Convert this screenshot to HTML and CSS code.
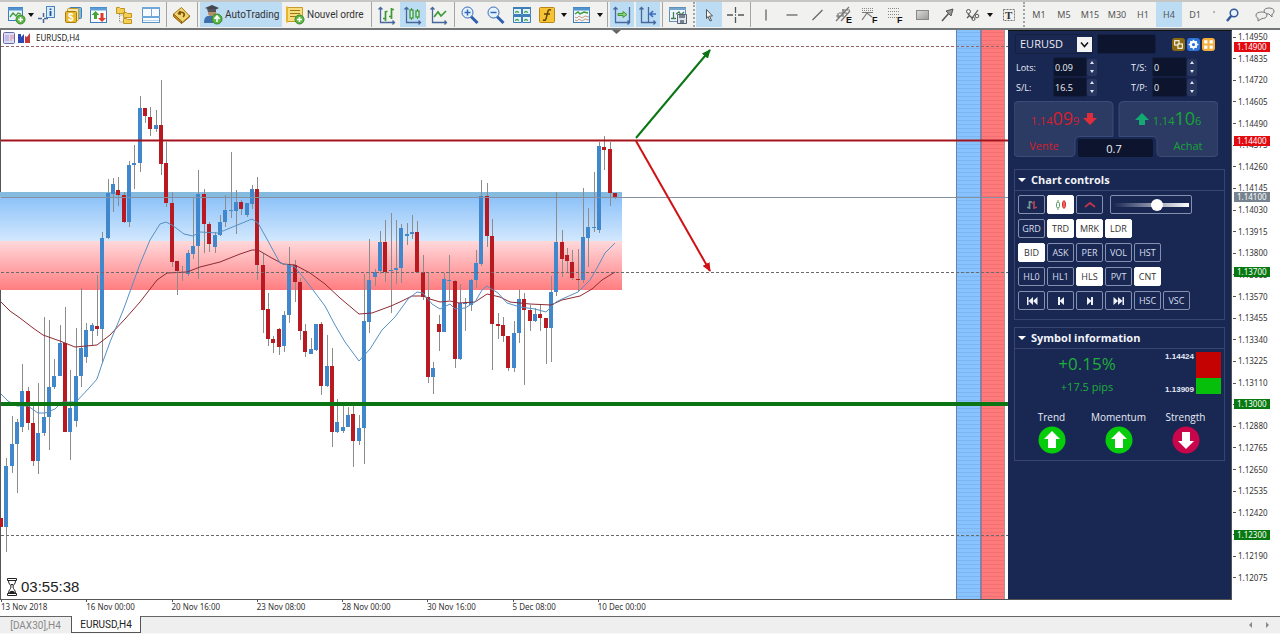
FILE: index.html
```html
<!DOCTYPE html>
<html lang="en">
<head>
<meta charset="utf-8">
<title>EURUSD,H4</title>
<link rel="stylesheet" href="styles.css">
</head>
<body>
<div class="app">
<header class="toolbar">
  <button class="tool narrow" aria-label="New chart"><svg class="icon" viewBox="0 0 20 20"><rect x="2.500" y="2.500" width="14" height="13" fill="#e9f4fc" stroke="#3c7dbb"/><path d="M2 4h15" stroke="#4f93cf" stroke-width="3"/><path d="M4 12l3-4 3 3 2-3 3 1" fill="none" stroke="#3d9a35" stroke-width="1.300"/><circle cx="14.500" cy="14.500" r="4.500" fill="#5bb545" stroke="#3b8a2c"/><path d="M14.500 12v5M12 14.500h5" stroke="#fff" stroke-width="1.600"/></svg></button>
  <button class="caret slim" aria-label="Chart list"><svg class="arrow" viewBox="0 0 6 4"><path d="M0 0h6l-3 4z"/></svg></button>
  <button class="tool" aria-label="Market watch"><svg class="icon" viewBox="0 0 20 20"><path d="M6.500 8v11M1 13.500h11" stroke="#4a6a94" stroke-width="1.500" stroke-dasharray="4 2"/><rect x="9.500" y="1.500" width="8" height="11" fill="#d7ecfb" stroke="#4b87bd"/><path d="M13.500 6v5M13.500 3.500v1.500" stroke="#244f9c" stroke-width="1.800"/></svg></button>
  <button class="tool" aria-label="Symbols"><svg class="icon" viewBox="0 0 20 20"><rect x="6.500" y="2.500" width="12" height="11" rx="1" fill="#7db7e4" stroke="#3f7eb3"/><rect x="4.500" y="3.500" width="11" height="12" rx="1" fill="#f6e7a8" stroke="#c49a2a"/><rect x="2.500" y="6.500" width="11" height="11" rx="1" fill="#e9b92c" stroke="#a97b12"/><text class="ic-s" x="5" y="16">$</text></svg></button>
  <button class="tool" aria-label="Exchange"><svg class="icon" viewBox="0 0 20 20"><rect x="1.500" y="2.500" width="16" height="15" fill="#fff" stroke="#3c7dbb"/><path d="M1 4h17" stroke="#5b9fd6" stroke-width="3"/><path d="M6.500 6l4 4H8v4H5v-4H2.500z" fill="#46a53a"/><path d="M13 17l-4-4h2.500V8h3v5H17z" fill="#dc3b2e"/></svg></button>
  <button class="tool" aria-label="Navigator"><svg class="icon" viewBox="0 0 20 20"><path d="M4.500 7v10h5M4.500 10h5" fill="none" stroke="#8f8b6b" stroke-dasharray="1 1"/><path d="M1.500 2.500h3l1 1h4v5h-8zM8.500 7.500h3l1 1h4v4h-8zM8.500 13.500h3l1 1h4v4h-8z" fill="#f4cf52" stroke="#c09522"/></svg></button>
  <button class="tool" aria-label="Terminal"><svg class="icon" viewBox="0 0 20 20"><rect x="1.500" y="2.500" width="17" height="15" fill="#f7fbff" stroke="#5c93c1"/><path d="M1 3h18M1 12h18" stroke="#6da8d8" stroke-width="2"/><path d="M10.500 3v8" stroke="#7ba7cc"/><path d="M2 15.500h16" stroke="#b8d4ea"/></svg></button>
  <span class="sep"></span>
  <button class="tool" aria-label="History"><svg class="icon" viewBox="0 0 20 20"><path d="M1.500 9l8-6.500 8 8.500-8 7z" fill="#f3d56e" stroke="#a5781a"/><path d="M1.500 9v2.500l8 7v-2.500zM9.500 18.500l8-6.500v-1.500" fill="#c98f20" stroke="#8a6416"/><path d="M6 9l2.500-3M6 9h3M7 8c4-2 7 1 4 4" fill="none" stroke="#7d5510" stroke-width="1.600"/></svg></button>
  <span class="sep"></span>
  <button class="tool-text active"><svg class="icon" viewBox="0 0 20 20"><path d="M2 3l7-3 7 3-6 3z" fill="#45464c"/><path d="M5 4h8v4c0 5-8 5-8 0z" fill="#b38f6c"/><path d="M4 4h9v3H5z" fill="#55565c"/><path d="M1 18c0-7 3-7 6-7 5 0 8 1 8 7z" fill="#3f70ab"/><circle cx="14" cy="14" r="5" fill="#5bb545" stroke="#37872b"/><path d="M14 17v-5M11.500 14l2.500-3 2.500 3" fill="none" stroke="#fff" stroke-width="1.600"/></svg>AutoTrading</button>
  <button class="tool-text"><svg class="icon" viewBox="0 0 20 20"><path d="M2.500 2.500h15v10l-3 4h-12z" fill="#f8dd79" stroke="#c79c2a"/><path d="M1 1.500h2v16H1" fill="#e7b42e"/><path d="M5 5.500h10M5 8.500h10M5 11.500h7" stroke="#9b7622"/><circle cx="14.500" cy="14.500" r="4.500" fill="#5bb545" stroke="#3b8a2c"/><path d="M14.500 12v5M12 14.500h5" stroke="#fff" stroke-width="1.600"/></svg>Nouvel ordre</button>
  <span class="sep"></span>
  <button class="tool" aria-label="Bar chart"><svg class="icon" viewBox="0 0 20 20"><path class="ax" d="M3.500 3v14.500H17M1.500 4.500l2-2 2 2M15.500 15.500l2 2-2 2"/><path d="M8.500 6v10M6 13.500h2.500M8.500 6.500h2M14.500 3v11M12 11.500h2.500M14.500 4.500h2.500" stroke="#3c9a35" stroke-width="1.700"/></svg></button>
  <button class="tool active" aria-label="Candlesticks"><svg class="icon" viewBox="0 0 20 20"><path class="ax" d="M3.500 3v14.500H17M1.500 4.500l2-2 2 2M15.500 15.500l2 2-2 2"/><path d="M8.500 3v12M14.500 4v10" stroke="#3c9a35"/><rect x="7" y="5" width="3" height="8" fill="#d5eef6" stroke="#3c9a35" stroke-width="1.300"/><rect x="13" y="6" width="3" height="6" fill="#d5eef6" stroke="#3c9a35" stroke-width="1.300"/></svg></button>
  <button class="tool" aria-label="Line chart"><svg class="icon" viewBox="0 0 20 20"><path class="ax" d="M3.500 3v14.500H17M1.500 4.500l2-2 2 2M15.500 15.500l2 2-2 2"/><path d="M5 12l4-5 3 4 5-5" fill="none" stroke="#3c9a35" stroke-width="1.700"/></svg></button>
  <span class="sep"></span>
  <button class="tool" aria-label="Zoom in"><svg class="icon" viewBox="0 0 20 20"><path d="M10.500 11l7 7" stroke="#2f5fae" stroke-width="3"/><circle cx="7.500" cy="7.500" r="5.500" fill="#e4f2fc" stroke="#3268b5"/><path d="M7.500 4.500v6M4.500 7.500h6" stroke="#3268b5" stroke-width="1.500"/></svg></button>
  <button class="tool" aria-label="Zoom out"><svg class="icon" viewBox="0 0 20 20"><path d="M10.500 11l7 7" stroke="#2f5fae" stroke-width="3"/><circle cx="7.500" cy="7.500" r="5.500" fill="#e4f2fc" stroke="#3268b5"/><path d="M4.500 7.500h6" stroke="#3268b5" stroke-width="1.500"/></svg></button>
  <button class="tool" aria-label="Tile windows"><svg class="icon" viewBox="0 0 20 20"><path d="M1.500 2.500h8v7h-8zM10.500 2.500h8v7h-8zM1.500 10.500h8v7h-8zM10.500 10.500h8v7h-8z" fill="#e3f3fb" stroke="#3f7fb8"/><path d="M1 3h18M1 11h18" stroke="#3f7fb8" stroke-width="2"/><path d="M3 7.500l2-1 2 1M12 7.500l2-1 2 1M3 15.500l2-1 2 1M12 15.500l2-1 2 1" fill="none" stroke="#3c9a35" stroke-width="1.300"/></svg></button>
  <button class="tool narrow" aria-label="Indicators"><svg class="icon" viewBox="0 0 20 20"><rect x="2.500" y="2.500" width="15" height="15" rx="1" fill="#f6c433" stroke="#b98618"/><path d="M14 5c-3-1-3 1-4 5s-1 6-4 5M7 9h6" fill="none" stroke="#5f440b" stroke-width="1.500"/></svg></button>
  <button class="caret" aria-label="Indicator list"><svg class="arrow" viewBox="0 0 6 4"><path d="M0 0h6l-3 4z"/></svg></button>
  <button class="tool" aria-label="Templates"><svg class="icon" viewBox="0 0 20 20"><rect x="1.500" y="2.500" width="16" height="15" fill="#eef7fd" stroke="#3f7fb8"/><path d="M1 4h17" stroke="#4f93cf" stroke-width="3"/><path d="M3 9l3-2 2 2 4-2 4 1" fill="none" stroke="#3c9a35" stroke-width="1.400"/><path d="M3 12l2 1 2-2 3 2 3-2 4 1M3 15l2 1 2-2 3 2 3-2 4 1" fill="none" stroke="#d19a7c"/></svg></button>
  <button class="caret" aria-label="Template list"><svg class="arrow" viewBox="0 0 6 4"><path d="M0 0h6l-3 4z"/></svg></button>
  <span class="sep"></span>
  <button class="tool narrow active" aria-label="Auto scroll"><svg class="icon" viewBox="0 0 20 20"><path class="ax" d="M3.500 2v15.500H17M17.500 2v16M1.500 4.500l2-2 2 2M15.500 15.500l2 2-2 2"/><path d="M6 8.500h5V6.500l4 3-4 3v-2H6z" fill="#8fd07f" stroke="#3c9a35"/></svg></button>
  <span class="gap"></span>
  <button class="tool narrow active" aria-label="Chart shift"><svg class="icon" viewBox="0 0 20 20"><path class="ax" d="M3.500 3v14.500H17M10.500 2v15M1.500 4.500l2-2 2 2M15.500 15.500l2 2-2 2"/><path d="M18 9h-5M15 6l-3 3 3 3" fill="none" stroke="#3c6fc0" stroke-width="1.700"/></svg></button>
  <span class="sep"></span>
  <button class="tool" aria-label="Save template"><svg class="icon" viewBox="0 0 20 20"><rect x="1.500" y="2.500" width="16" height="14" fill="#eef7fd" stroke="#6390b5"/><path d="M1 4h17" stroke="#74a5cc" stroke-width="2"/><path d="M5.500 7v7M3 13.500h5M8 9l3-2 2 3 3-3" fill="none" stroke="#477b57" stroke-width="1.300"/><path d="M9.500 9.500h9v9h-9z" fill="#dfe5ea" stroke="#566273"/><path d="M11 10h6v3h-6zM12 15h4v3h-4z" fill="#768292"/></svg></button>
  <span class="sep dotted"></span>
  <button class="tool active" aria-label="Cursor"><svg class="icon" viewBox="0 0 20 20"><path d="M7.500 4.500l6 6.500h-3l2 4.500-1.500.5-2-4.500-1.500 2z" fill="#f6f6f6" stroke="#555"/></svg></button>
  <button class="tool" aria-label="Crosshair"><svg class="icon" viewBox="0 0 20 20"><path d="M10.500 2v6M10.500 12v6M2 10h6M13 10h6M10 10h1" stroke="#555" stroke-width="1.300"/></svg></button>
  <span class="sep"></span>
  <button class="tool" aria-label="Vertical line"><svg class="icon" viewBox="0 0 20 20"><path d="M10 4.500v11" stroke="#666" stroke-width="1.300"/></svg></button>
  <button class="tool" aria-label="Horizontal line"><svg class="icon" viewBox="0 0 20 20"><path d="M4.500 10h11" stroke="#666" stroke-width="1.300"/></svg></button>
  <button class="tool" aria-label="Trend line"><svg class="icon" viewBox="0 0 20 20"><path d="M4.500 15l10-10" stroke="#666" stroke-width="1.300"/></svg></button>
  <button class="tool" aria-label="Channel"><svg class="icon" viewBox="0 0 20 20"><path d="M2 16L15 2M7 16L16 6M2 11h6M5 8h8M8 5h8M4 8v5M9 4v8" stroke="#777" stroke-width="1.200"/><text class="ic-l" x="12" y="18">E</text></svg></button>
  <button class="tool" aria-label="Fibonacci fan"><svg class="icon" viewBox="0 0 20 20"><path d="M2 3.500h12M2 5.500h12" stroke="#888" stroke-dasharray="1 1"/><path d="M2 7.500h11M2 15l5-7 5 4" fill="none" stroke="#777" stroke-width="1.200"/><text class="ic-l" x="12" y="18">F</text></svg></button>
  <button class="tool" aria-label="Fibonacci lines"><svg class="icon" viewBox="0 0 20 20"><path d="M2 3.500h12M2 6.500h12M2 9.500h12M2 12.500h9" stroke="#888" stroke-dasharray="1 1"/><text class="ic-l" x="11" y="18">F</text></svg></button>
  <button class="tool" aria-label="Rectangle"><svg class="icon" viewBox="0 0 20 20"><defs><linearGradient id="boxfill" x1="0" y1="0" x2="1" y2="1"><stop offset="0" stop-color="#ddd"/><stop offset="1" stop-color="#999"/></linearGradient></defs><rect x="4.500" y="5.500" width="12" height="9" fill="url(#boxfill)" stroke="#888"/></svg></button>
  <button class="tool" aria-label="Arrow"><svg class="icon" viewBox="0 0 20 20"><path d="M4 16l7-8" stroke="#555" stroke-width="1.500"/><path d="M8 6l7-2-2 7z" fill="#999" stroke="#555"/></svg></button>
  <button class="tool narrow" aria-label="Shapes"><svg class="icon" viewBox="0 0 20 20"><circle cx="5.500" cy="6.500" r="2" fill="none" stroke="#555"/><path d="M5 9l4 4 6-8M4 13l3-3" fill="none" stroke="#555" stroke-width="1.200"/><circle cx="14" cy="11" r="1.800" fill="none" stroke="#555"/><circle cx="10.500" cy="14" r="1.500" fill="none" stroke="#555"/></svg></button>
  <button class="caret" aria-label="Shape list"><svg class="arrow" viewBox="0 0 6 4"><path d="M0 0h6l-3 4z"/></svg></button>
  <button class="tool" aria-label="Text label"><svg class="icon" viewBox="0 0 20 20"><rect x="5.500" y="4.500" width="11" height="11" fill="none" stroke="#777" stroke-dasharray="2 1"/><text class="ic-t" x="7" y="14">T</text></svg></button>
  <span class="sep dotted"></span>
  <button class="period">M1</button><button class="period tight">M5</button><button class="period wide">M15</button><button class="period">M30</button><button class="period">H1</button><button class="period active">H4</button><button class="period">D1</button><button class="period cut">'</button>
  <button class="tool" aria-label="Search"><svg class="icon" viewBox="0 0 20 20"><path d="M4 16l5-6" stroke="#31599c" stroke-width="2.500"/><circle cx="11" cy="8" r="3.800" fill="#eaf3fb" stroke="#31599c" stroke-width="1.500"/></svg></button>
  <button class="tool chat" aria-label="Messages"><svg class="icon" viewBox="0 0 20 20"><path d="M9 6c0-4 10-4 10 0 0 2-1 3-2 3v3l-3-3c-3 0-5-1-5-3z" fill="#eee" stroke="#777"/><path d="M1 10c0-4 11-4 11 0 0 3-3 3.500-5 3.500L3 16v-3c-1 0-2-1-2-3z" fill="#eee" stroke="#777"/></svg></button>
</header>

<main class="workspace">
  <section class="chart" aria-label="EURUSD,H4 chart">
    <svg class="plot" id="plot">
      <defs>
        <linearGradient id="supply" x1="0" y1="0" x2="0" y2="1"><stop offset="0" stop-color="#84bdf8"/><stop offset="1" stop-color="#d3e8fe"/></linearGradient>
        <linearGradient id="demand" x1="0" y1="0" x2="0" y2="1"><stop offset="0" stop-color="#ffd9db"/><stop offset="1" stop-color="#ff7d80"/></linearGradient>
        <pattern id="bluelines" width="24" height="4" patternUnits="userSpaceOnUse"><rect width="24" height="4" fill="#88c3ff"/><rect y="2" width="24" height="1" fill="#7cb5f0"/></pattern>
        <pattern id="redlines" width="24" height="4" patternUnits="userSpaceOnUse"><rect width="24" height="4" fill="#ff7b7b"/><rect y="2" width="24" height="1" fill="#f07073"/></pattern>
        <marker id="headup" markerUnits="userSpaceOnUse" markerWidth="10" markerHeight="8" refX="8" refY="4" orient="auto"><path d="M0 0l9 4-9 4z" fill="#0a7512"/></marker>
        <marker id="headdown" markerUnits="userSpaceOnUse" markerWidth="10" markerHeight="8" refX="8" refY="4" orient="auto"><path d="M0 0l9 4-9 4z" fill="#d01014"/></marker>
      </defs>
      <rect y="162" width="622" height="49" fill="url(#supply)"/>
      <rect y="162" width="622" height="5" fill="#84bbdf"/>
      <rect y="211" width="622" height="49" fill="url(#demand)"/>
      <svg class="bands" x="100%"><rect x="-52" width="25" height="100%" fill="url(#bluelines)"/><rect x="-27" width="24" height="100%" fill="url(#redlines)"/><rect x="-52" width="1" height="100%" fill="#6584a8"/><rect x="-28" width="2" height="100%" fill="#8c7fa0"/><rect x="-4" width="1" height="100%" fill="#b78a9c"/></svg>
      <g id="candles"></g>
      <polyline class="ma slow" points="1,272 10,281 20,288 33,298 43,305 60,311 75,317 97,315 110,305 125,289 140,272 157,250 167,243 187,242 200,237 220,232 240,224 252,220 258,220 270,227 283,234 295,235 310,243 325,254 340,268 359,284 372,283 391,276 402,271 412,266 423,266 430,269 440,272 450,271 459,273 475,272 487,264 500,267 510,272 530,274 551,275 562,270 580,266 592,259 602,250 615,242"/>
      <polyline class="ma fast" points="1,364 8,371 17,376 28,376 38,383 45,383 55,379 62,372 76,372 90,357 97,349 102,334 110,312 118,293 124,278 140,234 150,210 160,194 166,192 172,195 184,204 193,206 200,202 218,203 235,196 252,189 258,193 268,211 280,233 295,237 310,256 325,276 335,295 345,312 359,331 370,319 382,300 395,287 408,269 417,262 423,263 432,274 440,279 450,274 455,279 465,278 475,272 482,260 487,256 498,263 507,273 520,277 535,279 546,282 556,272 562,269 578,262 590,250 597,238 605,223 615,213"/>
      <line class="dash upper" x1="1" x2="100%" y1="16.500" y2="16.500"/>
      <line class="resist" x1="1" x2="100%" y1="110.500" y2="110.500"/>
      <line class="bid" x1="1" x2="100%" y1="167.500" y2="167.500"/>
      <line class="dash" x1="1" x2="100%" y1="242.500" y2="242.500"/>
      <line class="support" x1="1" x2="100%" y1="374" y2="374"/>
      <line class="dash" x1="1" x2="100%" y1="505.500" y2="505.500"/>
      <line class="up" x1="636" y1="108" x2="710" y2="20" marker-end="url(#headup)"/>
      <line class="down" x1="636" y1="111" x2="710" y2="241" marker-end="url(#headdown)"/>
      <path d="M612 0h9l-4.500 4z" fill="#666"/>
    </svg>
    <h1 class="chart-title"><svg class="mini" viewBox="0 0 28 12"><rect x=".5" y=".5" width="11" height="11" rx="1" fill="#dcdcf4" stroke="#6a6aa8"/><path d="M3 3v6M5 3v6" stroke="#a993dc"/><path d="M8 3v6M10 3v4" stroke="#e08aa0"/><path d="M15 2h3v3l3-3v9h-6z" fill="#2c49b4"/><path d="M22 4l2 1 3-4v10h-5z" fill="#c33a3a"/></svg>EURUSD,H4</h1>
    <p class="timer"><svg class="glass" viewBox="0 0 12 20"><path d="M1.500 1.500h9v2h-9zM1.500 16.500h9v2h-9z" fill="#fff" stroke="#222"/><path d="M2.500 4c0 3 2.500 4 2.500 6s-2.500 3-2.500 6M9.500 4c0 3-2.500 4-2.500 6s2.500 3 2.500 6" fill="none" stroke="#222"/><path d="M3 16c1-3 5-3 6 0zM4.500 7h3L6 9z" fill="#222"/></svg>03:55:38</p>
  </section>

  <aside class="panel">
    <div class="symbol-row">
      <select class="symbol" aria-label="Symbol"><option>EURUSD</option></select>
      <input class="dark note" aria-label="Comment">
      <button class="chip brown" aria-label="Copy"><svg viewBox="0 0 12 12"><rect x="2.500" y="2.500" width="4" height="4" fill="none" stroke="#fff"/><rect x="5.500" y="5.500" width="4" height="4" fill="#8c6a10" stroke="#fff"/></svg></button>
      <button class="chip azure" aria-label="Settings"><svg viewBox="0 0 12 12"><circle cx="6" cy="6" r="2.500" fill="none" stroke="#fff" stroke-width="2"/><path d="M6 1.500v2M6 8.500v2M1.500 6h2M8.500 6h2M3 3l1 1M9 3L8 4M3 9l1-1M9 9L8 8" stroke="#fff" stroke-width="1.300"/></svg></button>
      <button class="chip amber" aria-label="Layout"><svg viewBox="0 0 12 12"><path d="M2 2h3v3H2zM7 2h3v3H7zM2 7h3v3H2zM7 7h3v3H7z" fill="#fff"/></svg></button>
    </div>
    <div class="fields">
      <label for="lots">Lots:</label><input class="dark" id="lots" value="0.09"><span class="spin"><button aria-label="More lots"></button><button class="dec" aria-label="Fewer lots"></button></span>
      <label for="ts">T/S:</label><input class="dark" id="ts" value="0"><span class="spin"><button aria-label="Raise T/S"></button><button class="dec" aria-label="Lower T/S"></button></span>
      <label for="sl">S/L:</label><input class="dark" id="sl" value="16.5"><span class="spin"><button aria-label="Raise S/L"></button><button class="dec" aria-label="Lower S/L"></button></span>
      <label for="tp">T/P:</label><input class="dark" id="tp" value="0"><span class="spin"><button aria-label="Raise T/P"></button><button class="dec" aria-label="Lower T/P"></button></span>
    </div>
    <div class="deal">
      <button class="trade sell"><svg class="shape" viewBox="0 0 100 56"><path d="M4 .5h91q4 0 4 4v31H65q-4 0-4 4v12q0 4-4 4H4q-4 0-4-4v-47q0-4 4-4z"/></svg><span class="quote">1.14<b>09</b><i>9</i><svg class="dir" viewBox="0 0 14 14"><path d="M4 1h6v5h4l-7 7-7-7h4z"/></svg></span><span class="verb">Vente</span></button>
      <button class="trade buy"><svg class="shape" viewBox="0 0 100 56"><path d="M96 .5H5q-4 0-4 4v31h34q4 0 4 4v12q0 4 4 4h53q4 0 4-4v-47q0-4-4-4z"/></svg><span class="quote"><svg class="dir" viewBox="0 0 14 14"><path d="M4 13h6V8h4L7 1 0 8h4z"/></svg>1.14<b>10</b><i>6</i></span><span class="verb">Achat</span></button>
      <input class="dark spread" aria-label="Spread" value="0.7">
    </div>

    <section class="box">
      <h2>Chart controls</h2>
      <div class="controls">
        <div class="keys">
          <button aria-label="Bars"><svg class="g" viewBox="0 0 12 12"><path d="M3.500 2v8M1 8.500h3M3 3h3" stroke="#759c95" stroke-width="1.700"/><path d="M8 2v8M8 8.500h3M6 4h2" stroke="#b64254" stroke-width="1.700"/></svg></button>
          <button class="on" aria-label="Candles"><svg class="g" viewBox="0 0 12 12"><path d="M3 1v10" stroke="#5a9c62"/><rect x="1.500" y="3.500" width="3" height="5" rx="1" fill="#fff" stroke="#5a9c62"/><path d="M9 1v9" stroke="#d33"/><rect x="7.500" y="2.500" width="3" height="6" rx="1" fill="#e26a60" stroke="#d33"/></svg></button>
          <button aria-label="Line"><svg class="g" viewBox="0 0 12 12"><path d="M1 8l5-4 5 4" fill="none" stroke="#c0344a" stroke-width="1.800"/></svg></button>
          <span class="slide"><input type="range" aria-label="Zoom" min="0" max="100" value="60"></span>
        </div>
        <div class="keys"><button>GRD</button><button class="on">TRD</button><button class="on">MRK</button><button class="on">LDR</button></div>
        <div class="keys"><button class="on">BID</button><button>ASK</button><button>PER</button><button>VOL</button><button>HST</button></div>
        <div class="keys"><button>HL0</button><button>HL1</button><button class="on">HLS</button><button>PVT</button><button class="on">CNT</button></div>
        <div class="keys">
          <button aria-label="First"><svg class="g" viewBox="0 0 12 12"><path d="M1 2h1.500v8H1zM7 2v8L2.500 6zM11.500 2v8L7 6z"/></svg></button>
          <button aria-label="Previous"><svg class="g" viewBox="0 0 12 12"><path d="M3 2h2v8H3zM9 2v8L4.500 6z"/></svg></button>
          <button aria-label="Next"><svg class="g" viewBox="0 0 12 12"><path d="M9 2H7v8h2zM3 2v8L7.500 6z"/></svg></button>
          <button aria-label="Last"><svg class="g" viewBox="0 0 12 12"><path d="M11 2H9.500v8H11zM5 2v8L9.500 6zM.5 2v8L5 6z"/></svg></button>
          <button>HSC</button><button>VSC</button>
        </div>
      </div>
    </section>

    <section class="box info">
      <h2>Symbol information</h2>
      <div class="change">
        <p class="figures"><span class="percent">+0.15%</span><span class="pips">+17.5 pips</span></p>
        <p class="range"><span>1.14424</span><span>1.13909</span></p>
        <div class="gauge"></div>
      </div>
      <ul class="signals">
        <li>Trend<svg viewBox="0 0 28 28"><circle cx="14" cy="14" r="13.500" fill="#07cc0c"/><path d="M14 5l8 8h-4v9h-8v-9H6z" fill="#fff"/></svg></li>
        <li>Momentum<svg viewBox="0 0 28 28"><circle cx="14" cy="14" r="13.500" fill="#07cc0c"/><path d="M14 5l8 8h-4v9h-8v-9H6z" fill="#fff"/></svg></li>
        <li>Strength<svg viewBox="0 0 28 28"><circle cx="14" cy="14" r="13.500" fill="#c9064b"/><path d="M14 23l8-8h-4V6h-8v9H6z" fill="#fff"/></svg></li>
      </ul>
    </section>
  </aside>

  <div class="scale">
    <ol class="prices">
      <li>1.14950</li><li>1.14835</li><li>1.14720</li><li>1.14605</li><li>1.14490</li><li>1.14375</li><li>1.14260</li><li>1.14145</li><li>1.14030</li><li>1.13915</li><li>1.13800</li><li>1.13685</li><li>1.13570</li><li>1.13455</li><li>1.13340</li><li>1.13225</li><li>1.13110</li><li>1.12995</li><li>1.12880</li><li>1.12765</li><li>1.12650</li><li>1.12535</li><li>1.12420</li><li>1.12305</li><li>1.12190</li><li>1.12075</li>
    </ol>
    <span class="tag red t1">1.14900</span><span class="tag red t2">1.14400</span><span class="tag grey t3">1.14100</span><span class="tag green t4">1.13700</span><span class="tag green t5">1.13000</span><span class="tag green t6">1.12300</span>
  </div>
</main>

<ol class="times"><li>13 Nov 2018</li><li>16 Nov 00:00</li><li>20 Nov 16:00</li><li>23 Nov 08:00</li><li>28 Nov 00:00</li><li>30 Nov 16:00</li><li>5 Dec 08:00</li><li>10 Dec 00:00</li></ol>

<nav class="tabs">
  <a href="#dax">[DAX30],H4</a><a class="current" href="#eurusd">EURUSD,H4</a>
  <button class="scroll first" aria-label="Scroll left"><svg viewBox="0 0 4 8"><path d="M4 1v6L1 4z"/></svg></button>
  <button class="scroll" aria-label="Scroll right"><svg viewBox="0 0 4 8"><path d="M0 1v6l3-3z"/></svg></button>
</nav>
</div>
<script src="chart.js"></script>
</body>
</html>
```
FILE: styles.css
```css
* { box-sizing: border-box; }
body { margin: 0; background: #fff; color: #333; font-family: "Open Sans", "Noto Sans", sans-serif; }
.app { min-height: 100vh; display: flex; flex-direction: column; }
button { margin: 0; padding: 0; border: 0; background: none; font: inherit; color: inherit; }
ol, ul { margin: 0; padding: 0; list-style: none; }
p, h1, h2 { margin: 0; font-weight: 400; }

/* toolbar */
.toolbar { display: flex; align-items: stretch; height: 30px; padding: 0 2px 1px 4px; background: #f1f1f0; border-top: 2px solid #c6c6c4; border-bottom: 2px solid #74777a; overflow: hidden; }
.toolbar > * { flex: none; }
.tool, .period { width: 26px; display: flex; align-items: center; justify-content: center; }
.narrow, .tight { width: 24px; }
.wide { width: 28px; }
.cut { width: 12px; }
.gap { width: 2px; }
.caret { width: 10px; display: flex; align-items: center; justify-content: center; }
.slim { width: 6px; }
.icon { width: 20px; height: 20px; flex: none; }
.arrow { width: 6px; height: 4px; fill: #111; }
.ax { fill: none; stroke: #47689c; stroke-width: 1.3px; }
.ic-s, .ic-l, .ic-t { font-family: "Liberation Sans", sans-serif; font-weight: 700; font-size: 10px; fill: #fff; }
.ic-l { font-size: 9px; fill: #111; }
.ic-t { font-family: "Liberation Serif", serif; fill: #333; font-size: 11px; }
.active { background: #bcdcf4; }
.tool-text { display: flex; align-items: center; gap: 2px; width: 82px; padding-left: 3px; font-family: Roboto, "Noto Sans", sans-serif; font-size: 10px; color: #333; white-space: nowrap; }
.tool-text + .tool-text { width: 87px; }
.period { font-family: "Noto Sans", sans-serif; font-size: 9px; color: #555; }
.sep { width: 5px; display: flex; justify-content: center; }
.sep::before { content: ""; border-left: 1px solid #a5a5a5; }
.sep.dotted::before { border-left-style: dotted; border-left-width: 2px; }
.chat { margin-left: auto; }

/* workspace */
.workspace { flex: 1; display: grid; grid-template-columns: minmax(0, 1fr) 224px 48px; border-left: 1px solid #555; }
.chart { position: relative; border-bottom: 1px solid #555; }
.plot { display: block; width: calc(100% + 1px); height: 100%; margin-left: -1px; overflow: visible; }
.bands { overflow: visible; }
.ma { fill: none; stroke-width: 1px; }
.slow { stroke: #8e2a34; }
.fast { stroke: #5790c2; }
.dash { stroke: #6a6a6a; stroke-dasharray: 3 2; }
.upper { stroke: #93646a; }
.resist { stroke: #a3141c; stroke-width: 2px; }
.bid { stroke: #8591a3; }
.support { stroke: #0a7512; stroke-width: 4px; }
.up { stroke: #0a7512; stroke-width: 2px; }
.down { stroke: #d01014; stroke-width: 2px; }
.wick { fill: none; stroke: #8c8c8c; }
.rise, .fall { fill: none; stroke: #4187cb; stroke-width: 4px; }
.fall { stroke: #b81a22; }
.chart-title { position: absolute; left: 2px; top: 2px; display: flex; align-items: center; gap: 5px; font-family: "Noto Sans", sans-serif; font-size: 8px; line-height: 12px; color: #222; }
.mini { width: 28px; height: 12px; }
.timer { position: absolute; left: 5px; bottom: 2px; display: flex; align-items: center; gap: 3px; font: 15px/18px "Liberation Sans", sans-serif; color: #222; }
.glass { width: 12px; height: 20px; }

/* trading panel */
.panel { background: #192753; color: #e8ecf5; padding: 3px 6px 8px; border-top: 1px solid #111; border-right: 1px solid #555; border-bottom: 1px solid #555; font-size: 9px; }
.dark { background: #0d152e; color: #eef1f7; border: 1px solid #141f42; border-radius: 2px; font: 9px/16px "Open Sans", sans-serif; padding: 0 1px; width: 100%; min-width: 0; height: 20px; }
.symbol-row { display: flex; align-items: center; gap: 2px; height: 20px; padding-left: 1px; }
.symbol { appearance: none; width: 78px; height: 20px; margin-right: 2px; padding: 0 4px; color: #e8ecf4; border: 1px solid #15203f; border-radius: 2px; font: 11px/16px "Open Sans", sans-serif; background: url("data:image/svg+xml,%3Csvg xmlns='http://www.w3.org/2000/svg' width='15' height='15'%3E%3Crect width='15' height='15' fill='%23f4f4f4'/%3E%3Cpath d='M4 5.500l3.500 4 3.500-4' fill='none' stroke='%23111' stroke-width='1.500'/%3E%3C/svg%3E") right center no-repeat #1a2750; }
.note { width: 59px; margin-right: 14px; }
.chip { width: 13px; height: 13px; border-radius: 3px; display: flex; }
.chip svg { width: 13px; height: 13px; }
.brown { background: #8c6a10; }
.azure { background: #2f73d8; }
.amber { background: #f3ae3d; }
.fields { display: grid; grid-template-columns: 37px 34px 44px 21px 35px 10px; align-items: center; padding: 3px 0 0 2px; }
.spin { width: 10px; height: 17px; display: flex; flex-direction: column; justify-content: space-between; background: #283660; border-radius: 2px; }
.spin button { height: 8px; display: flex; justify-content: center; align-items: center; }
.spin button::before { content: ""; border: 2px solid transparent; border-bottom: 3px solid #dfe5f2; border-top: 0; }
.spin .dec::before { border-top: 3px solid #dfe5f2; border-bottom: 0; }
.deal { position: relative; display: flex; justify-content: space-between; padding: 4px 7px 0 0; }
.trade { position: relative; width: 100px; height: 56px; display: flex; flex-direction: column; font-size: 11px; }
.sell { color: #d3202f; align-items: flex-start; }
.buy { color: #18a336; align-items: flex-end; }
.shape { position: absolute; inset: 0; width: 100%; height: 100%; fill: #2c3b64; stroke: #3c4b76; }
.quote { position: relative; width: 100%; height: 36px; display: flex; align-items: baseline; justify-content: center; line-height: 34px; }
.quote b { font-weight: 400; font-size: 18px; }
.quote i { font-style: normal; }
.dir { width: 14px; height: 14px; margin-left: 4px; align-self: center; fill: currentColor; }
.sell .dir { fill: #e02d3a; }
.buy .dir { margin: 0 4px 0 0; fill: #12aa72; }
.verb { position: relative; width: 60px; text-align: center; line-height: 18px; }
.spread { position: absolute; left: 64px; bottom: 0; width: 75px; height: 18px; text-align: center; font-size: 11px; border: 0; padding: 0 3px 0 0; }
.box { margin-top: 12px; border: 1px solid #36446f; }
.box h2 { display: flex; align-items: center; gap: 5px; height: 21px; padding-left: 3px; border-bottom: 1px solid #36446f; font-size: 11px; font-weight: 700; line-height: 20px; color: #f2f4f9; }
.box h2::before { content: ""; border: 4px solid transparent; border-top: 4px solid #fff; border-bottom: 0; }
.controls { display: flex; flex-direction: column; gap: 5px; padding: 4px 3px 9px; }
.keys { display: flex; gap: 2px; }
.keys button { width: 27px; height: 19px; border: 1px solid #8490b0; border-radius: 2px; display: flex; align-items: center; justify-content: center; font-size: 9px; line-height: 16px; color: #d8deeb; }
.keys .on { background: #fff; border-color: #fff; color: #333; }
.g { width: 12px; height: 12px; fill: #eef1f7; }
.slide { width: 82px; height: 19px; margin-left: 5px; border: 1px solid #8490b0; border-radius: 2px; display: flex; align-items: center; padding: 0 2px; }
.slide input { appearance: none; width: 100%; height: 12px; margin: 0; background: linear-gradient(90deg, #192753, #fff) center / 100% 4px no-repeat; }
.slide input::-webkit-slider-thumb { appearance: none; width: 12px; height: 12px; border-radius: 50%; background: #fff; }
.info { margin-top: 7px; }
.change { display: flex; padding: 3px 3px 0 4px; height: 59px; }
.figures { width: 136px; display: flex; flex-direction: column; align-items: center; color: #1fae3b; }
.percent { font-size: 17px; line-height: 24px; }
.pips { font-size: 11px; line-height: 22px; }
.range { width: 41px; height: 42px; padding-right: 2px; text-align: right; display: flex; flex-direction: column; justify-content: space-between; font: 700 8px/9px "Liberation Sans", sans-serif; color: #e6eaf3; }
.gauge { width: 25px; height: 42px; background: linear-gradient(#c40202 0 63%, #06bf0a 63%); }
.signals { display: grid; grid-template-columns: repeat(3, 67px); justify-content: center; height: 52px; padding-right: 2px; }
.signals li { display: flex; flex-direction: column; align-items: center; font-size: 10px; line-height: 18px; }
.signals svg { width: 28px; height: 28px; }

/* axes */
.scale { position: relative; display: flex; padding-bottom: 15px; font-family: "Noto Sans", sans-serif; font-size: 8px; }
.prices { flex: 1; display: flex; flex-direction: column; justify-content: space-between; }
.prices li { height: 14px; line-height: 14px; display: flex; align-items: center; gap: 2px; padding-left: 1px; }
.prices li::before { content: ""; width: 3px; border-top: 1px solid #555; }
.tag { position: absolute; left: 2px; width: 36px; height: 10px; padding-left: 3px; line-height: 10px; color: #fff; }
.red { background: #e30a10; }
.grey { background: #76838f; }
.green { background: #067a10; }
.t1 { top: 12px; }
.t2 { top: 106px; }
.t3 { top: 162px; }
.t4 { top: 237px; }
.t5 { top: 369px; }
.t6 { top: 500px; }
.times { width: 683px; display: grid; grid-template-columns: repeat(8, 1fr); height: 16px; font-family: "Noto Sans", sans-serif; font-size: 8px; line-height: 14px; white-space: nowrap; padding-left: 1px; }
.times li::before { content: ""; display: block; height: 2px; width: 1px; margin-bottom: -2px; background: #555; }

/* chart tabs */
.tabs { display: flex; height: 18px; background: #f0eff0; border-top: 1px solid #666; border-bottom: 1px solid #f8f8f8; padding-right: 3px; font-family: Roboto, "Noto Sans", sans-serif; font-size: 10px; line-height: 17px; }
.tabs a { width: 71px; text-align: center; color: #888; text-decoration: none; }
.tabs .current { width: 70px; margin-top: -1px; background: #fff; color: #222; border: 1px solid #555; border-top: 0; }
.scroll { width: 18px; display: flex; align-items: center; justify-content: center; }
.scroll.first { margin-left: auto; }
.scroll svg { width: 4px; height: 8px; fill: #888; }
```
FILE: chart.js
```js
// One row per candle: high, low, body top, body bottom, 1 when rising.
const candles = [
[518,527,518,527,0],[458,552,466,527,1],[416,473,444,466,1],[419,493,422,444,1],[364,432,391,427,1],[387,430,391,423,0],
[402,466,423,461,0],[383,474,433,461,1],[317,436,417,433,1],[320,450,387,417,1],[359,389,376,387,1],[325,376,343,376,1],
[307,432,343,432,0],[370,460,408,432,1],[328,427,376,421,1],[288,387,348,376,1],[323,363,330,357,1],[323,345,325,331,1],
[275,336,326,329,0],[232,363,238,329,1],[179,239,193,238,1],[178,212,184,194,1],[177,206,190,195,0],[192,223,195,222,0],
[161,227,165,222,1],[145,189,163,165,1],[96,172,108,163,1],[108,123,108,116,0],[107,136,117,129,0],[110,132,125,129,1],
[80,175,125,164,0],[142,207,163,203,0],[192,267,203,262,0],[261,295,261,271,0],[266,281,272,273,1],[250,276,253,274,1],
[197,259,246,254,1],[170,279,194,246,1],[189,253,194,224,0],[222,252,224,244,0],[232,253,235,247,1],[215,236,222,235,1],
[195,227,210,222,1],[152,218,210,211,1],[190,234,202,211,1],[200,215,202,209,0],[203,217,203,215,1],[185,209,189,204,1],
[177,280,189,265,0],[253,333,265,310,0],[293,346,309,339,0],[336,353,339,343,0],[328,355,329,347,0],[311,352,315,346,1],
[247,323,265,315,1],[260,302,265,282,0],[278,340,282,331,0],[324,357,331,352,0],[338,354,349,354,1],[324,351,324,350,1],
[322,395,324,386,0],[335,387,366,386,1],[348,447,366,432,0],[399,433,422,432,1],[405,433,427,431,1],[407,427,415,427,1],
[406,467,414,441,0],[415,445,428,441,1],[274,464,321,428,1],[239,333,280,322,1],[269,286,272,277,1],[231,274,242,271,1],
[220,282,242,272,0],[213,313,270,271,1],[220,284,268,270,1],[224,283,228,268,1],[223,245,234,236,1],[215,239,232,234,1],
[221,273,232,272,0],[255,300,272,297,0],[273,383,297,377,0],[362,394,368,377,1],[315,351,324,332,0],[273,332,279,332,1],
[255,300,280,281,1],[280,368,281,359,0],[284,360,303,359,1],[298,331,303,304,1],[279,311,280,305,1],[250,288,263,280,1],
[180,266,196,264,1],[183,247,196,236,0],[219,370,236,324,0],[313,339,324,326,0],[317,342,325,336,0],[336,371,336,368,0],
[321,372,333,368,1],[289,343,299,333,1],[293,385,299,310,0],[305,331,310,321,0],[308,322,314,321,1],[304,331,314,318,0],
[318,364,318,328,0],[276,362,292,328,1],[192,296,242,292,1],[230,277,242,259,0],[248,273,255,261,0],[250,280,262,278,0],
[249,291,279,280,0],[188,283,237,280,1],[208,267,227,238,1],[172,232,227,228,1],[142,233,146,230,1],[136,170,147,150,0],
[142,206,149,193,0],[193,199,193,197,0]
];
const top0 = 30;
const paths = { wick: "", rise: "", fall: "" };
candles.forEach(([high, low, open, close, rising], i) => {
  const x = Math.round(0.9 + i * 5.34);
  paths.wick += `M${x + 0.5} ${high - top0}V${low - top0}`;
  paths[rising ? "rise" : "fall"] += `M${x} ${open - top0}V${close - top0}`;
});
const group = document.getElementById("candles");
for (const name of Object.keys(paths)) {
  const path = document.createElementNS("http://www.w3.org/2000/svg", "path");
  path.setAttribute("class", name);
  path.setAttribute("d", paths[name]);
  group.appendChild(path);
}
```
